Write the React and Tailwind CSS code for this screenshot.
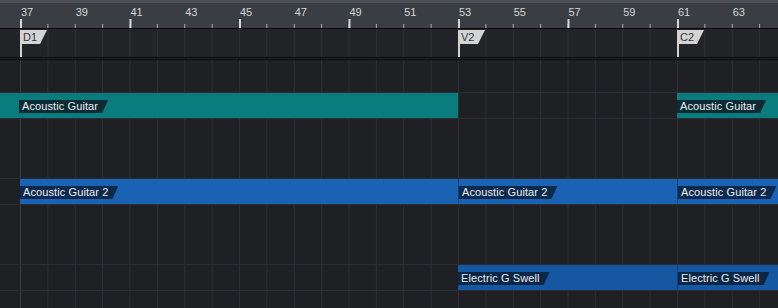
const rulerNumbers = [37, 39, 41, 43, 45, 47, 49, 51, 53, 55, 57, 59, 61, 63];

const markers = [
    { name: "D1", left: 20 },
    { name: "V2", left: 458 },
    { name: "C2", left: 677 },
];

const tracks = [
    {
        clips: [
            { name: "Acoustic Guitar", width: 458, color: "teal", labelOffset: 19 },
            { gap: 219 },
            { name: "Acoustic Guitar", width: 140, color: "teal" },
        ],
    },
    {
        clips: [
            { gap: 20 },
            { name: "Acoustic Guitar 2", width: 438, color: "blue" },
            { name: "Acoustic Guitar 2", width: 219, color: "blue", edge: true },
            { name: "Acoustic Guitar 2", width: 140, color: "blue", edge: true },
        ],
    },
    {
        clips: [
            { gap: 458 },
            { name: "Electric G Swell", width: 219, color: "dark" },
            { name: "Electric G Swell", width: 140, color: "dark", edge: true },
        ],
    },
];

const clipColors = {
    teal: { body: "bg-[#0b7c7e]", label: "bg-[#0c2b33]" },
    blue: { body: "bg-[#1a63b4]", label: "bg-[#0d2a4c]" },
    dark: { body: "bg-[#1657a2]", label: "bg-[#0c2646]" },
};

function Clip({ clip }) {
    if (clip.gap) return <div className="shrink-0 h-full" style={{ width: clip.gap }} />;
    const c = clipColors[clip.color];
    return (
        <div
            className={`shrink-0 h-full ${c.body} ${clip.edge ? "border-l border-[#10427a]" : ""}`}
            style={{ width: clip.width, paddingLeft: clip.labelOffset || 0 }}
        >
            <div
                className={`inline-flex h-[13px] items-center pl-[3px] pr-[10px] ${c.label} [clip-path:polygon(0_0,100%_0,calc(100%-6px)_100%,0_100%)]`}
            >
                <span className="text-[11px] leading-[13px] tracking-[0.1px] text-[#e9eff3] whitespace-nowrap">
                    {clip.name}
                </span>
            </div>
        </div>
    );
}

export default function App() {
    return (
        <div
            className="w-[778px] h-[308px] overflow-hidden flex flex-col bg-[#1e2023] select-none"
            style={{ fontFamily: '"Liberation Sans", Arial, sans-serif' }}
        >
            {/* RULER */}
            <div className="h-[3px] shrink-0 bg-[#4d5055]" />
            <div className="h-[25px] shrink-0 bg-[#3a3d42] flex flex-col">
                <div className="flex pl-[21px] pt-[2px] h-[16px]">
                    {rulerNumbers.map((n) => (
                        <div
                            key={n}
                            className="shrink-0 w-[54.75px] text-[11px] leading-[14px] text-[#d3d6d9]"
                        >
                            {n}
                        </div>
                    ))}
                </div>
                <div className="h-[9px] bg-repeat-x bg-[linear-gradient(90deg,#d6d8db_2px,transparent_2px),linear-gradient(90deg,#a9acb0_1px,transparent_1px)] bg-[length:109.5px_100%,27.375px_4px] bg-[position:20px_0,20px_100%]" />
            </div>
            <div className="h-px shrink-0 bg-[#08090a]" />

            {/* MARKER ROW */}
            <div className="relative h-[28px] shrink-0 bg-[#222427] bg-[linear-gradient(90deg,#2e3135_1px,transparent_1px)] bg-[length:27.375px_100%] bg-[position:20px_0]">
                {markers.map((m) => (
                    <div key={m.name} className="absolute top-0 h-full" style={{ left: m.left }}>
                        <div className="absolute left-0 top-[1px] w-[2px] h-[27px] bg-[#d2d2d2]" />
                        <div className="relative z-10 mt-[1px] w-[27px] h-[14px] bg-[#d4d4d4] pl-[3px] flex items-center [clip-path:polygon(0_0,100%_0,calc(100%-7px)_100%,0_100%)]">
                            <span className="text-[11px] leading-[14px] text-[#333333]">{m.name}</span>
                        </div>
                    </div>
                ))}
            </div>
            <div className="h-px shrink-0 bg-[#08090a]" />
            <div className="h-px shrink-0 bg-[#25272a]" />
            <div className="h-px shrink-0 bg-[#08090a]" />

            {/* TRACKS */}
            <div className="flex-1 flex flex-col pt-[32px] gap-[59px] bg-[linear-gradient(90deg,#3a3d41_1px,transparent_1px),linear-gradient(90deg,#2c2f33_1px,transparent_1px)] bg-[length:100%_100%,27.375px_100%] bg-[position:20px_0,20px_0]">
                {tracks.map((t, i) => (
                    <div
                        key={i}
                        className="shrink-0 h-[27px] border-y border-[#2a2d31] flex overflow-hidden"
                    >
                        {t.clips.map((clip, j) => (
                            <Clip key={j} clip={clip} />
                        ))}
                    </div>
                ))}
            </div>
        </div>
    );
}
